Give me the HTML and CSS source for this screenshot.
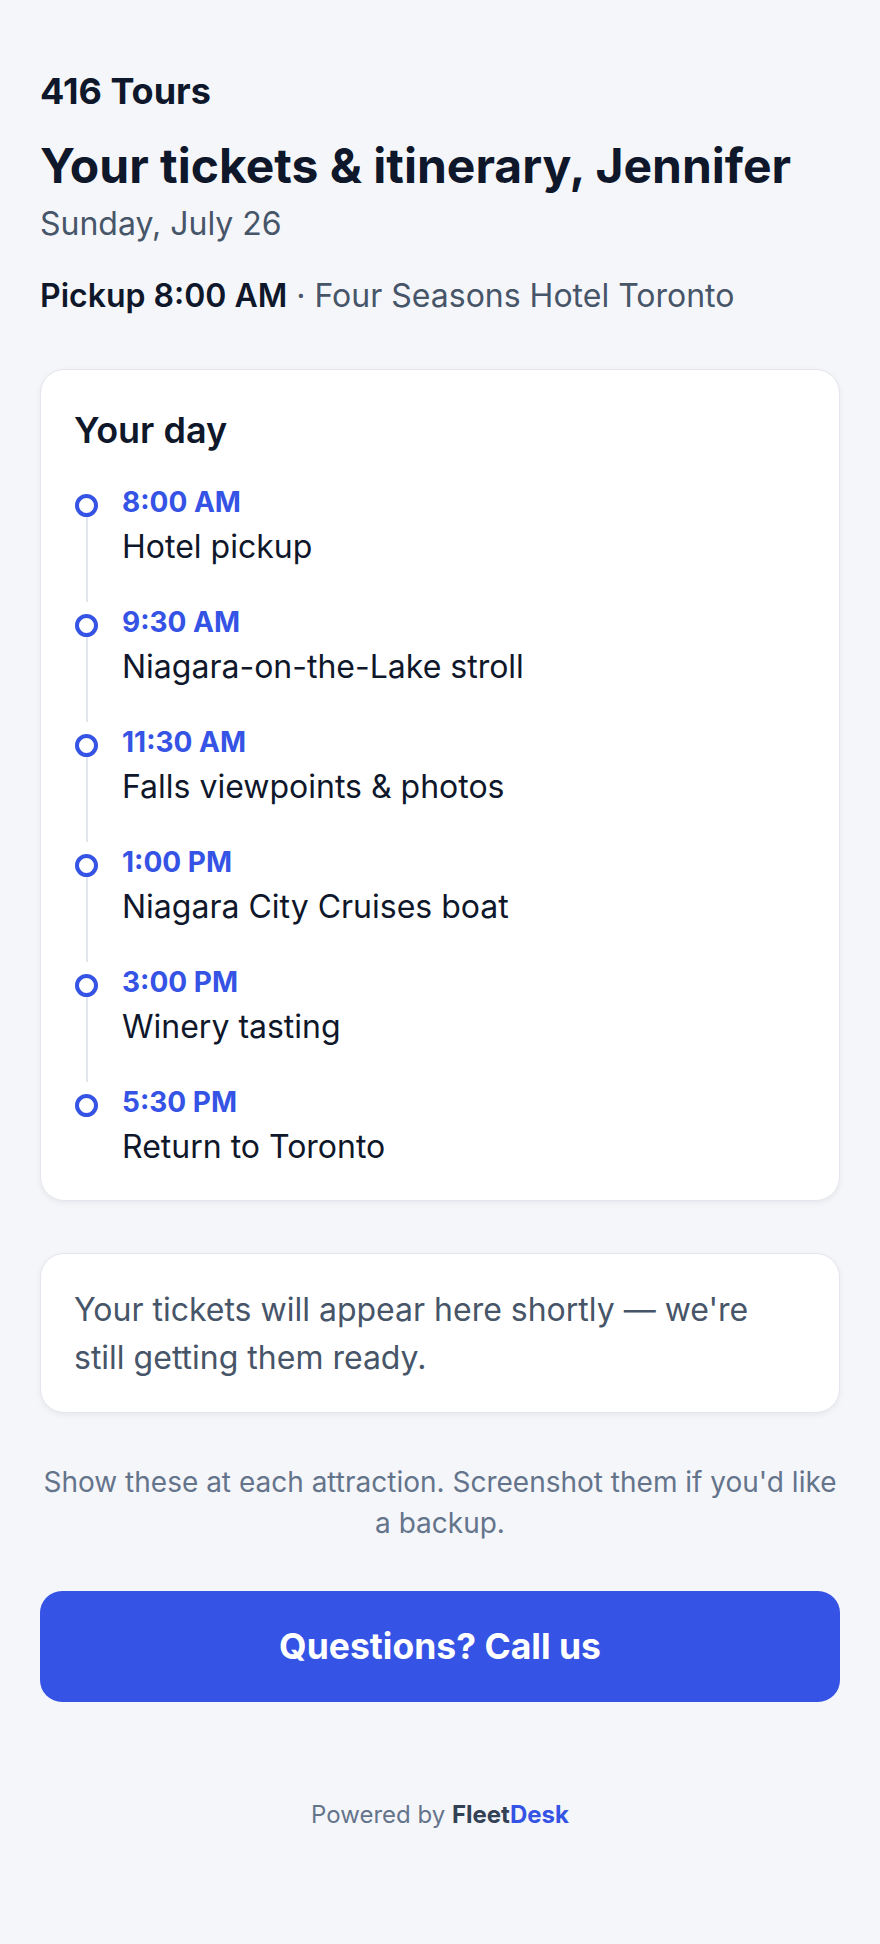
FILE: index.html
```html
<!DOCTYPE html>
<html lang="en">
<head>
  <meta charset="UTF-8" />
  <meta name="viewport" content="width=device-width, initial-scale=1.0"/>
  <title>Your tickets & itinerary</title>
  <link rel="stylesheet" href="styles.css">
</head>
<body>
  <div class="page">
    <div class="brand">416 Tours</div>
    <h1>Your tickets &amp; itinerary, Jennifer</h1>
    <p class="date">Sunday, July 26</p>
    <p class="pickup"><strong>Pickup 8:00 AM</strong> · Four Seasons Hotel Toronto</p>

    <!-- itinerary -->
    <div class="card day">
      <h2>Your day</h2>
      <ul class="timeline">
        <li class="stop">
          <div class="marker"><span class="dot"></span><span class="line"></span></div>
          <div class="info">
            <div class="time">8:00 AM</div>
            <div class="what">Hotel pickup</div>
          </div>
        </li>
        <li class="stop">
          <div class="marker"><span class="dot"></span><span class="line"></span></div>
          <div class="info">
            <div class="time">9:30 AM</div>
            <div class="what">Niagara-on-the-Lake stroll</div>
          </div>
        </li>
        <li class="stop">
          <div class="marker"><span class="dot"></span><span class="line"></span></div>
          <div class="info">
            <div class="time">11:30 AM</div>
            <div class="what">Falls viewpoints &amp; photos</div>
          </div>
        </li>
        <li class="stop">
          <div class="marker"><span class="dot"></span><span class="line"></span></div>
          <div class="info">
            <div class="time">1:00 PM</div>
            <div class="what">Niagara City Cruises boat</div>
          </div>
        </li>
        <li class="stop">
          <div class="marker"><span class="dot"></span><span class="line"></span></div>
          <div class="info">
            <div class="time">3:00 PM</div>
            <div class="what">Winery tasting</div>
          </div>
        </li>
        <li class="stop last">
          <div class="marker"><span class="dot"></span></div>
          <div class="info">
            <div class="time">5:30 PM</div>
            <div class="what">Return to Toronto</div>
          </div>
        </li>
      </ul>
    </div>

    <!-- tickets -->
    <div class="card tickets">
      <p>Your tickets will appear here shortly — we're still getting them ready.</p>
    </div>

    <p class="note">Show these at each attraction. Screenshot them if you'd like a backup.</p>

    <a class="call-btn" href="#">Questions? Call us</a>

    <p class="powered">Powered by <span class="fleet">Fleet</span><span class="desk">Desk</span></p>
  </div>
</body>
</html>
```

FILE: styles.css
```css
* {
  box-sizing: border-box;
}
body {
  margin: 0;
  font-family: Inter, 'Noto Sans', sans-serif;
  background: #f5f6fa;
  color: #0f172a;
}
.page {
  padding: 72px 40px 100px;
}
.brand {
  font-size: 36px;
  font-weight: 700;
  line-height: 38px;
}
h1 {
  font-size: 48px;
  font-weight: 700;
  line-height: 50px;
  margin: 31px 0 0;
}
.date {
  font-size: 32px;
  line-height: 36px;
  color: #475569;
  margin: 15px 0 0;
}
.pickup {
  font-size: 32px;
  line-height: 36px;
  color: #475569;
  margin: 36px 0 0;
}
.pickup strong {
  color: #0f172a;
  font-weight: 600;
}
.card {
  background: #fff;
  border: 1px solid #e3e6ec;
  border-radius: 24px;
  box-shadow: 0 2px 6px rgba(15, 23, 42, 0.06);
}
.day {
  margin-top: 55px;
  padding: 40px 33px 33px;
}
h2 {
  font-size: 36px;
  font-weight: 600;
  line-height: 40px;
  margin: 0 0 35px;
}
.timeline {
  list-style: none;
  margin: 0;
  padding: 0;
}
.stop {
  display: grid;
  grid-template-columns: 48px 1fr;
}
.marker {
  width: 23px;
  display: flex;
  flex-direction: column;
  align-items: center;
  padding-top: 9px;
  margin-left: 1px;
}
.dot {
  width: 23px;
  height: 23px;
  border: 4px solid #3553e5;
  border-radius: 50%;
  background: #fff;
  flex: none;
}
.line {
  flex: 1;
  width: 2px;
  background: #e2e5ec;
  margin-bottom: 3px;
}
.info {
  padding-bottom: 38px;
}
.stop.last .info {
  padding-bottom: 0;
}
.time {
  font-size: 28px;
  font-weight: 700;
  line-height: 34px;
  color: #3553e5;
}
.what {
  font-size: 32px;
  line-height: 40px;
  margin-top: 8px;
}
.tickets {
  margin-top: 52px;
  padding: 32px 33px 30px;
}
.tickets p {
  margin: 0;
  font-size: 32px;
  line-height: 48px;
  color: #475569;
}
.note {
  margin: 49px 0 0;
  text-align: center;
  font-size: 28px;
  line-height: 41px;
  color: #64748b;
}
.call-btn {
  display: flex;
  justify-content: center;
  align-items: center;
  height: 111px;
  margin-top: 47px;
  background: #3553e5;
  border-radius: 22px;
  color: #fff;
  font-size: 35.5px;
  font-weight: 700;
  text-decoration: none;
}
.powered {
  margin: 98px 0 0;
  text-align: center;
  font-size: 24px;
  line-height: 30px;
  color: #64748b;
}
.fleet {
  font-weight: 700;
  color: #334155;
}
.desk {
  font-weight: 700;
  color: #3553e5;
}
```
